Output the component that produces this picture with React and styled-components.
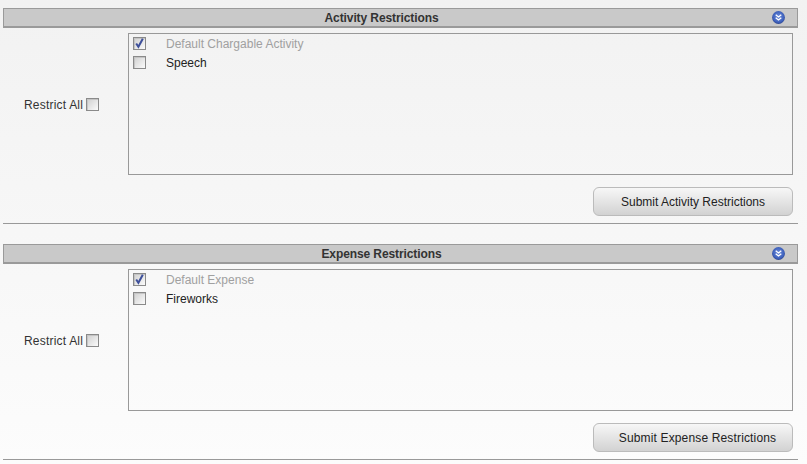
import React from 'react';
import styled, { createGlobalStyle } from 'styled-components';

const GlobalStyle = createGlobalStyle`
html, body {
    margin: 0;
    padding: 0;
    background: #f9f9f9;
}
body {
    font-family: "Liberation Sans", Arial, sans-serif;
    font-size: 12px;
    color: #222;
}
`

const sections = [
    {
        title: 'Activity Restrictions',
        items: [
            { label: 'Default Chargable Activity', locked: true },
            { label: 'Speech' },
        ],
        submit: 'Submit Activity Restrictions',
        shift: 0,
        spacing: 0,
    },
    {
        title: 'Expense Restrictions',
        items: [
            { label: 'Default Expense', locked: true },
            { label: 'Fireworks' },
        ],
        submit: 'Submit Expense Restrictions',
        shift: 9,
        spacing: 0.15,
    },
];

function Expander({ id }) {
    return (
        <ExpanderIcon viewBox="0 0 13 13">
            <defs>
                <radialGradient id={id} cx="50%" cy="45%" r="60%">
                    <stop offset="0" stopColor="#6f8fdc" />
                    <stop offset="0.7" stopColor="#3f62bd" />
                    <stop offset="1" stopColor="#24397f" />
                </radialGradient>
            </defs>
            <circle cx="6.5" cy="6.5" r="6.4" fill={`url(#${id})`} />
            <path d="M3.7 3.7 L6.5 5.9 L9.3 3.7 M3.7 6.7 L6.5 8.9 L9.3 6.7" fill="none" stroke="#fff" strokeWidth="1.3" />
        </ExpanderIcon>
    );
}

function Check({ checked }) {
    return (
        <CheckBox>
            {checked && (
                <svg width="11" height="11" viewBox="0 0 11 11">
                    <path d="M2.2 5.5 L4.4 8.8 L8.8 0.8" fill="none" stroke="#3d4f9a" strokeWidth="2" />
                </svg>
            )}
        </CheckBox>
    );
}

function Section({ title, items, submit, shift, spacing }) {
    return (
        <Wrapper>
            <Header>
                <Title>{title}</Title>
                <Expander id={`orb-${shift}`} />
            </Header>
            <Body>
                <RestrictAll>
                    <RestrictText>Restrict All</RestrictText>
                    <Check />
                </RestrictAll>
                <ListBox>
                    {items.map(item => (
                        <Row key={item.label}>
                            <Check checked={item.locked} />
                            <RowLabel $locked={item.locked}>{item.label}</RowLabel>
                        </Row>
                    ))}
                </ListBox>
            </Body>
            <Actions>
                <Button type="button" $shift={shift} $spacing={spacing}>{submit}</Button>
            </Actions>
            <Divider />
        </Wrapper>
    );
}

export default function App() {
    return (
        <Page>
            <GlobalStyle />
            {sections.map(s => <Section key={s.title} {...s} />)}
        </Page>
    );
}

const Page = styled.div`
width: 807px;
height: 464px;
overflow: hidden;
box-sizing: border-box;
padding: 8px 9px 0 3px;
background: linear-gradient(#f2f2f2, #fcfcfc);
display: flex;
flex-direction: column;
gap: 20px;
`
const Wrapper = styled.section`
display: flex;
flex-direction: column;
`
const Header = styled.div`
position: relative;
height: 20px;
box-sizing: border-box;
padding-right: 38px;
background: #c9c9c9;
border: 1px solid #9a9a9a;
border-bottom-width: 2px;
display: flex;
align-items: center;
justify-content: center;
`
const Title = styled.h2`
margin: 0;
font-size: 12px;
font-weight: 700;
letter-spacing: -0.1px;
color: #333;
`
const ExpanderIcon = styled.svg`
position: absolute;
right: 12.5px;
top: 1.5px;
width: 13px;
height: 13px;
`
const Body = styled.div`
margin-top: 5px;
display: flex;
align-items: center;
`
const RestrictAll = styled.label`
width: 125px;
box-sizing: border-box;
padding-left: 21px;
display: flex;
align-items: center;
gap: 3px;
color: #333;
`
const RestrictText = styled.span`
padding-top: 2px;
letter-spacing: 0.2px;
`
const ListBox = styled.div`
width: 665px;
height: 142px;
box-sizing: border-box;
border: 1px solid #999;
padding: 3px 0 0 4px;
display: flex;
flex-direction: column;
gap: 6px;
`
const Row = styled.div`
height: 13px;
display: flex;
align-items: center;
gap: 20px;
`
const RowLabel = styled.span`
padding-top: 1px;
color: ${p => (p.$locked ? '#a0a0a0' : '#222')};
`
const CheckBox = styled.span`
width: 13px;
height: 13px;
flex: none;
box-sizing: border-box;
border: 1px solid #8a8a8a;
box-shadow: inset 1px 1px 0 #c4c4c4;
background: linear-gradient(135deg, #cfcfcf, #fbfbfb);
display: inline-flex;
align-items: center;
justify-content: center;
`
const Actions = styled.div`
margin-top: 12px;
padding-right: 5px;
display: flex;
justify-content: flex-end;
`
const Button = styled.button`
width: 200px;
height: 29px;
box-sizing: border-box;
border: 1px solid #bbb;
border-radius: 6px;
background: linear-gradient(#f7f7f7, #d2d2d2);
font-family: inherit;
font-size: 12px;
letter-spacing: ${p => p.$spacing}px;
color: #222;
padding: 0 0 0 ${p => p.$shift}px;
`
const Divider = styled.hr`
margin: 7px 0 0;
border: none;
height: 1px;
background: #999;
`
